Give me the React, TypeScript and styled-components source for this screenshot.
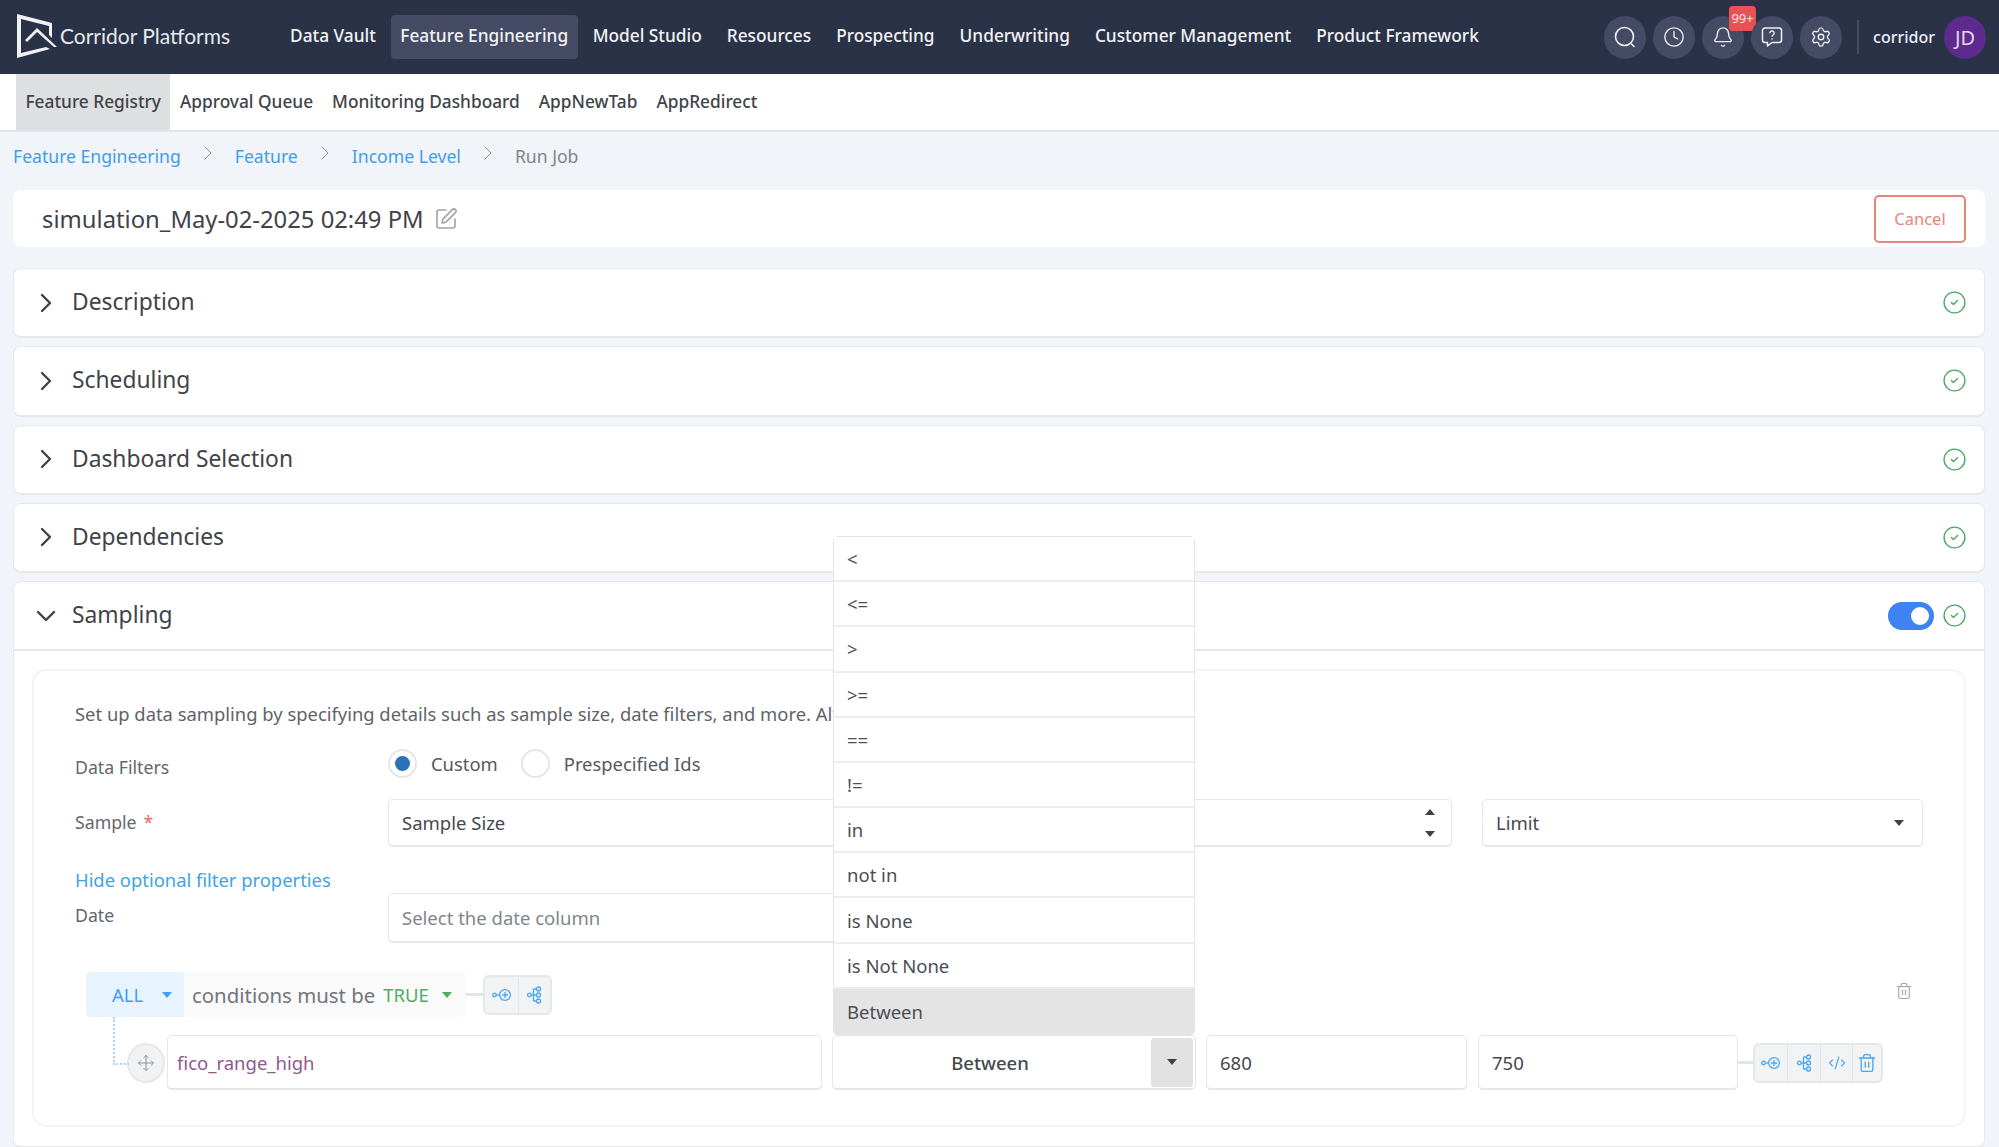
import React from "react";
import styled, { createGlobalStyle } from "styled-components";
import {
  Bell,
  ChevronDown,
  ChevronRight,
  CircleCheck,
  Clock,
  CodeXml,
  Move,
  Settings,
  SquarePen,
  Trash2,
} from "lucide-react";

const GlobalStyle = createGlobalStyle`
  html, body {
    margin: 0;
    padding: 0;
    height: 1147px;
    overflow: hidden;
    background: #f1f4f8;
    font-family: "Noto Sans", "Open Sans", sans-serif;
    color: #3f4349;
  }
  * { box-sizing: border-box; }
`;

const TopBar = styled.header`
  display: flex;
  align-items: center;
  height: 74px;
  padding: 0 13px 0 16px;
  background: #2a3248;
`;

const Brand = styled.div`
  display: flex;
  align-items: center;
  width: 264px;
  flex: none;
  svg {
    margin-top: -2px;
  }
`;

const BrandName = styled.span`
  margin-left: 2px;
  padding-bottom: 3px;
  font-family: "Lato", sans-serif;
  font-size: 21px;
  color: #e6e8ec;
  white-space: nowrap;
`;

const MainNav = styled.nav`
  display: flex;
  align-items: center;
  gap: 5px;
  flex: 1;
`;

const MainNavItem = styled.a<{ $active?: boolean }>`
  display: flex;
  align-items: center;
  height: 44px;
  padding: 0 ${(p) => (p.$active ? "9.5px" : "10px")} 3px;
  border-radius: 4px;
  font-size: 17.3px;
  font-weight: 500;
  color: #f2f3f5;
  white-space: nowrap;
  background: ${(p) => (p.$active ? "#454b65" : "transparent")};
`;

const ToolButtons = styled.div`
  display: flex;
  align-items: center;
  gap: 7px;
`;

const ToolButton = styled.div`
  position: relative;
  display: flex;
  align-items: center;
  justify-content: center;
  width: 42px;
  height: 43px;
  border-radius: 50%;
  background: #454b65;
  color: #eef0f3;
`;

const Badge = styled.span`
  position: absolute;
  top: -10px;
  left: 27px;
  width: 27px;
  height: 25px;
  border-radius: 4px;
  background: #e85252;
  color: #fbe3e3;
  font-size: 13px;
  line-height: 25px;
  text-align: center;
`;

const Divider = styled.div`
  width: 2px;
  height: 34px;
  margin: 0 14px 0 15px;
  background: #454b65;
`;

const UserName = styled.span`
  font-size: 16px;
  font-weight: 500;
  color: #eef0f3;
`;

const Avatar = styled.div`
  display: flex;
  align-items: center;
  justify-content: center;
  width: 42px;
  height: 43px;
  margin-left: 9px;
  border-radius: 50%;
  background: #5e2a8e;
  color: #e3d8ee;
  font-size: 20px;
`;

const SubNav = styled.nav`
  display: flex;
  height: 58px;
  padding-left: 16px;
  background: #fff;
  border-bottom: 2px solid #e4e4ea;
`;

const SubNavItem = styled.a<{ $active?: boolean }>`
  display: flex;
  align-items: center;
  padding: 0 9.5px 2px;
  font-size: 17.3px;
  font-weight: 500;
  color: #3f4349;
  white-space: nowrap;
  background: ${(p) => (p.$active ? "#dedfe1" : "transparent")};
`;

const Crumbs = styled.div`
  display: flex;
  align-items: center;
  height: 58px;
  padding: 0 0 10px 13px;
  font-size: 17.6px;
`;

const Crumb = styled.a<{ $current?: boolean }>`
  color: ${(p) => (p.$current ? "#80858b" : "#3d9df0")};
  white-space: nowrap;
`;

const CrumbGap = styled.span`
  display: flex;
  justify-content: center;
  width: 54px;
  color: #8b9096;
  margin-top: -6px;
`;

const Page = styled.main`
  display: flex;
  flex-direction: column;
  gap: 8px;
  padding: 0 14px 0 13px;
`;

const TitleCard = styled.div`
  display: flex;
  align-items: center;
  justify-content: space-between;
  height: 57px;
  margin-bottom: 13px;
  padding: 0 19px 0 29px;
  background: #fff;
  border-radius: 8px;
`;

const TitleText = styled.h1`
  display: flex;
  align-items: center;
  gap: 10px;
  margin: 0;
  font-size: 23.8px;
  font-weight: 400;
  color: #3f4349;
  svg {
    color: #a0a3a7;
  }
`;

const CancelButton = styled.button`
  width: 92px;
  height: 48px;
  background: #fff;
  border: 2px solid #e98578;
  border-radius: 5px;
  font: inherit;
  font-size: 16.5px;
  color: #e98578;
`;

const Section = styled.section`
  background: #fff;
  border: 1px solid #e6e8ea;
  border-bottom-width: 2px;
  border-radius: 8px;
`;

const SectionHeader = styled.div<{ $open?: boolean }>`
  display: flex;
  align-items: center;
  height: ${(p) => (p.$open ? "69px" : "67.25px")};
  padding: 0 17px 0 16px;
  border-bottom: ${(p) => (p.$open ? "2px solid #e6e8ea" : "none")};
  color: #3f4349;
`;

const SectionTitle = styled.span`
  flex: 1;
  margin-left: 10px;
  padding-bottom: 2px;
  font-size: 22.8px;
  line-height: 1.1;
`;

const Check = styled(CircleCheck)`
  color: #4fa865;
`;

const Toggle = styled.span`
  position: relative;
  width: 46px;
  height: 28px;
  margin-right: 8px;
  border-radius: 14px;
  background: #3f82f2;
  &::after {
    content: "";
    position: absolute;
    top: 5px;
    right: 5px;
    width: 18px;
    height: 18px;
    border-radius: 50%;
    background: #fff;
  }
`;

const SectionBody = styled.div`
  padding: 18px 18px 19px 18px;
`;

const InnerCard = styled.div`
  height: 458px;
  padding: 33px 41px 0 41px;
  border: 2px solid #f3f4f5;
  border-radius: 14px;
`;

const Description = styled.p`
  margin: 0 0 24px;
  font-size: 18.4px;
  line-height: 20px;
  color: #5e6369;
  white-space: nowrap;
`;

const FormRow = styled.div`
  display: flex;
  align-items: center;
`;

const FieldLabel = styled.label`
  width: 313px;
  flex: none;
  font-size: 17.7px;
  color: #63686e;
`;

const Required = styled.span`
  margin-left: 7px;
  color: #ec6a5e;
`;

const RadioRow = styled(FormRow)`
  height: 30px;
  margin-bottom: 21px;
  ${FieldLabel} {
    margin-top: 8px;
  }
`;

const RadioMark = styled.span<{ $checked?: boolean }>`
  display: flex;
  align-items: center;
  justify-content: center;
  width: 29px;
  height: 29px;
  margin-right: 14px;
  border: 2px solid #e4e6e9;
  border-radius: 50%;
  &::after {
    content: "";
    width: 15px;
    height: 15px;
    border-radius: 50%;
    background: ${(p) => (p.$checked ? "#2a72b5" : "transparent")};
  }
`;

const RadioText = styled.span`
  margin-right: 23px;
  font-size: 18.4px;
  color: #54595f;
`;

const TextBox = styled.div<{ $width: number; $height: number; $muted?: boolean }>`
  position: relative;
  display: flex;
  align-items: center;
  justify-content: space-between;
  width: ${(p) => p.$width}px;
  height: ${(p) => p.$height}px;
  padding: 0 13px;
  flex: none;
  background: #fff;
  border: 1px solid #e4e6e9;
  border-bottom-width: 2px;
  border-radius: 5px;
  font-size: 18.5px;
  color: ${(p) => (p.$muted ? "#81868c" : "#44484e")};
`;

const Caret = styled.span<{ $up?: boolean; $color?: string }>`
  display: inline-block;
  width: 0;
  height: 0;
  border-left: 5px solid transparent;
  border-right: 5px solid transparent;
  ${(p) =>
    p.$up
      ? `border-bottom: 6px solid ${p.$color ?? "#3f4349"};`
      : `border-top: 6px solid ${p.$color ?? "#3f4349"};`}
`;

const Spinner = styled.span`
  display: flex;
  flex-direction: column;
  gap: 16px;
  margin-right: 3px;
`;

const LinkRow = styled.div`
  margin: 23px 0 3px;
  height: 20px;
  font-size: 18.4px;
  line-height: 20px;
  color: #3fa3e0;
`;

const SampleRow = styled(FormRow)`
  gap: 30px;
  height: 48px;
  ${FieldLabel} {
    margin-right: -30px;
    margin-top: -3px;
  }
`;

const LimitBox = styled(TextBox)`
  padding-right: 18px;
`;

const DateRow = styled(FormRow)`
  height: 50px;
  ${FieldLabel} {
    margin-top: -6px;
  }
`;

const GroupRow = styled.div`
  display: flex;
  align-items: center;
  height: 45px;
  margin: 29px 0 18px;
  padding-left: 11px;
`;

const AllBox = styled.div`
  display: flex;
  align-items: center;
  justify-content: space-between;
  width: 98px;
  height: 45px;
  padding: 0 12px 0 26px;
  background: #e7f4ff;
  border-radius: 5px 0 0 5px;
  font-size: 18.5px;
  color: #3f9ff2;
`;

const ConditionBox = styled.div`
  display: flex;
  align-items: center;
  width: 282px;
  height: 45px;
  padding-left: 8px;
  background: #fafafa;
  border-radius: 0 5px 5px 0;
  font-size: 20.4px;
  color: #72767b;
  white-space: nowrap;
`;

const TrueText = styled.span`
  margin: 0 13px 0 8px;
  font-size: 18.5px;
  color: #55aa65;
`;

const Connector = styled.span<{ $width: number }>`
  width: ${(p) => p.$width}px;
  height: 3px;
  flex: none;
  background: #e3e4e5;
`;

const ActionGroup = styled.div`
  display: flex;
  height: 40px;
  flex: none;
  background: #f1f3f4;
  border: 2px solid #e6e7e8;
  border-radius: 6px;
  color: #49a6f4;
`;

const ActionCell = styled.span<{ $width: number }>`
  display: flex;
  align-items: center;
  justify-content: center;
  width: ${(p) => p.$width}px;
  & + & {
    border-left: 1px solid #e2e4e5;
  }
`;

const GroupTrash = styled(Trash2)`
  margin-left: auto;
  margin-right: 10px;
  margin-top: -8px;
  color: #a3a5a8;
`;

const ConditionRow = styled.div`
  position: relative;
  display: flex;
  align-items: center;
  height: 55px;
  padding-left: 52px;
  &::before {
    content: "";
    position: absolute;
    left: 38px;
    top: 0;
    width: 14px;
    height: 28px;
    margin-top: -18px;
    padding-top: 18px;
    box-sizing: content-box;
    border-left: 2px dotted #a9d7fb;
    border-bottom: 2px dotted #a9d7fb;
  }
`;

const MoveHandle = styled.span`
  display: flex;
  align-items: center;
  justify-content: center;
  width: 38px;
  height: 40px;
  margin-right: 2px;
  flex: none;
  background: #f1f2f3;
  border: 2px solid #e6e7e8;
  border-radius: 50%;
  color: #8f9295;
`;

const FieldName = styled(TextBox)`
  margin-right: 10px;
  padding-left: 9px;
  color: #8d5a8e;
`;

const ValueBox = styled(TextBox)`
  margin-right: 11px;
`;

const OperatorSelect = styled(TextBox)`
  margin-right: 10px;
  padding: 0 2px 0 0;
`;

const OperatorValue = styled.span`
  flex: 1;
  padding-right: 4px;
  font-weight: 500;
  text-align: center;
`;

const OperatorCaret = styled.span`
  display: flex;
  align-items: center;
  justify-content: center;
  width: 42px;
  height: 49px;
  background: #e2e2e2;
  border-radius: 3px;
`;

const OperatorMenu = styled.ul`
  position: absolute;
  left: 0;
  right: 0;
  bottom: calc(100% + 1px);
  margin: 0;
  padding: 0;
  list-style: none;
  background: #fff;
  border: 1px solid #e2e4e6;
  border-radius: 5px;
`;

const OperatorOption = styled.li<{ $selected?: boolean }>`
  display: flex;
  align-items: center;
  height: 45.2px;
  padding-left: 13px;
  border-bottom: 2px solid ${(p) => (p.$selected ? "#e4e4e4" : "#eceded")};
  background: ${(p) => (p.$selected ? "#e4e4e4" : "#fff")};
  color: #4a4e54;
  &:last-child {
    border-bottom: 0;
  }
`;

const LogoMark = () => (
  <svg width="42" height="44" viewBox="0 0 42 44" fill="none">
    <path d="M1 0 L36 9 L36 24 L33 21 L33 12 L5 5 L5 39 L30 33 L34 35 L1 44 Z" fill="#f1f2f4" />
    <path d="M9 26 L21 14 L41 33 L38 33 L21 18 L11 28 Z" fill="#f1f2f4" />
  </svg>
);

const SearchGlyph = () => (
  <svg width="22" height="22" viewBox="0 0 22 22" fill="none" stroke="currentColor" strokeWidth="1.6">
    <circle cx="10.5" cy="10.5" r="9" />
    <path d="M17.5 18 L20 20.5" strokeLinecap="round" />
  </svg>
);

const HelpGlyph = () => (
  <svg width="22" height="22" viewBox="0 0 22 22" fill="none" stroke="currentColor" strokeWidth="1.5">
    <path d="M4 2 H18 a2.5 2.5 0 0 1 2.5 2.5 V14 a2.5 2.5 0 0 1 -2.5 2.5 H11 L6.5 20 V16.5 H4 A2.5 2.5 0 0 1 1.5 14 V4.5 A2.5 2.5 0 0 1 4 2 Z" strokeLinejoin="round" />
    <path d="M8.8 7.2 a2.2 2.2 0 1 1 3.2 2 c-.7.4 -1 .8 -1 1.6" strokeWidth="1.4" />
    <circle cx="11" cy="13" r=".8" fill="currentColor" stroke="none" />
  </svg>
);

const AddRuleGlyph = () => (
  <svg width="20" height="14" viewBox="0 0 20 14" fill="none" stroke="currentColor" strokeWidth="1.3">
    <circle cx="2.5" cy="7" r="1.8" />
    <path d="M4.5 7 H7.5" />
    <circle cx="13" cy="7" r="5.4" />
    <path d="M13 4 V10 M10 7 H16" />
  </svg>
);

const AddGroupGlyph = () => (
  <svg width="15" height="18" viewBox="0 0 15 18" fill="none" stroke="currentColor" strokeWidth="1.3">
    <circle cx="2.4" cy="9" r="1.8" />
    <path d="M4.2 9 H6.5 M6.5 3 V15 M6.5 3 H9 M6.5 9 H9 M6.5 15 H9" />
    <circle cx="11.5" cy="3" r="2" />
    <circle cx="11.5" cy="9" r="2" />
    <circle cx="11.5" cy="15" r="2" />
  </svg>
);

const sections = ["Description", "Scheduling", "Dashboard Selection", "Dependencies"];
const operators = ["<", "<=", ">", ">=", "==", "!=", "in", "not in", "is None", "is Not None", "Between"];
const mainLinks = [
  "Data Vault",
  "Feature Engineering",
  "Model Studio",
  "Resources",
  "Prospecting",
  "Underwriting",
  "Customer Management",
  "Product Framework",
];
const subLinks = ["Feature Registry", "Approval Queue", "Monitoring Dashboard", "AppNewTab", "AppRedirect"];

export default function App() {
  return (
    <>
      <GlobalStyle />
      <TopBar>
        <Brand>
          <LogoMark />
          <BrandName>Corridor Platforms</BrandName>
        </Brand>
        <MainNav>
          {mainLinks.map((link) => (
            <MainNavItem key={link} $active={link === "Feature Engineering"}>
              {link}
            </MainNavItem>
          ))}
        </MainNav>
        <ToolButtons>
          <ToolButton><SearchGlyph /></ToolButton>
          <ToolButton><Clock size={22} strokeWidth={1.5} /></ToolButton>
          <ToolButton>
            <Bell size={22} strokeWidth={1.5} />
            <Badge>99+</Badge>
          </ToolButton>
          <ToolButton><HelpGlyph /></ToolButton>
          <ToolButton><Settings size={22} strokeWidth={1.5} /></ToolButton>
        </ToolButtons>
        <Divider />
        <UserName>corridor</UserName>
        <Avatar>JD</Avatar>
      </TopBar>
      <SubNav>
        {subLinks.map((link) => (
          <SubNavItem key={link} $active={link === "Feature Registry"}>
            {link}
          </SubNavItem>
        ))}
      </SubNav>
      <Crumbs>
        <Crumb>Feature Engineering</Crumb>
        <CrumbGap><ChevronRight size={24} strokeWidth={1} /></CrumbGap>
        <Crumb>Feature</Crumb>
        <CrumbGap><ChevronRight size={24} strokeWidth={1} /></CrumbGap>
        <Crumb>Income Level</Crumb>
        <CrumbGap><ChevronRight size={24} strokeWidth={1} /></CrumbGap>
        <Crumb $current>Run Job</Crumb>
      </Crumbs>
      <Page>
        <TitleCard>
          <TitleText>
            simulation_May-02-2025 02:49 PM
            <SquarePen size={24} strokeWidth={1.6} />
          </TitleText>
          <CancelButton>Cancel</CancelButton>
        </TitleCard>
        {sections.map((title) => (
          <Section key={title}>
            <SectionHeader>
              <ChevronRight size={32} strokeWidth={1.8} />
              <SectionTitle>{title}</SectionTitle>
              <Check size={25} strokeWidth={1.3} />
            </SectionHeader>
          </Section>
        ))}
        <Section>
          <SectionHeader $open>
            <ChevronDown size={32} strokeWidth={1.8} />
            <SectionTitle>Sampling</SectionTitle>
            <Toggle />
            <Check size={25} strokeWidth={1.3} />
          </SectionHeader>
          <SectionBody>
            <InnerCard>
              <Description>
                Set up data sampling by specifying details such as sample size, date filters, and more. Alternatively, you can provide a list of IDs
              </Description>
              <RadioRow>
                <FieldLabel>Data Filters</FieldLabel>
                <RadioMark $checked />
                <RadioText>Custom</RadioText>
                <RadioMark />
                <RadioText>Prespecified Ids</RadioText>
              </RadioRow>
              <SampleRow>
                <FieldLabel>
                  Sample<Required>*</Required>
                </FieldLabel>
                <TextBox $width={1064} $height={48}>
                  Sample Size
                  <Spinner>
                    <Caret $up />
                    <Caret />
                  </Spinner>
                </TextBox>
                <LimitBox $width={441} $height={48}>
                  Limit
                  <Caret />
                </LimitBox>
              </SampleRow>
              <LinkRow>Hide optional filter properties</LinkRow>
              <DateRow>
                <FieldLabel>Date</FieldLabel>
                <TextBox $width={700} $height={50} $muted>
                  Select the date column
                </TextBox>
              </DateRow>
              <GroupRow>
                <AllBox>
                  ALL
                  <Caret $color="#3f9ff2" />
                </AllBox>
                <ConditionBox>
                  conditions must be
                  <TrueText>TRUE</TrueText>
                  <Caret $color="#55aa65" />
                </ConditionBox>
                <Connector $width={17} />
                <ActionGroup>
                  <ActionCell $width={33}><AddRuleGlyph /></ActionCell>
                  <ActionCell $width={32}><AddGroupGlyph /></ActionCell>
                </ActionGroup>
                <GroupTrash size={18} strokeWidth={1.5} />
              </GroupRow>
              <ConditionRow>
                <MoveHandle><Move size={18} strokeWidth={1.3} /></MoveHandle>
                <FieldName $width={655} $height={55}>fico_range_high</FieldName>
                <OperatorSelect $width={364} $height={55}>
                  <OperatorValue>Between</OperatorValue>
                  <OperatorCaret><Caret /></OperatorCaret>
                  <OperatorMenu>
                    {operators.map((op) => (
                      <OperatorOption key={op} $selected={op === "Between"}>
                        {op}
                      </OperatorOption>
                    ))}
                  </OperatorMenu>
                </OperatorSelect>
                <ValueBox $width={261} $height={55}>680</ValueBox>
                <TextBox $width={260} $height={55}>750</TextBox>
                <Connector $width={15} />
                <ActionGroup>
                  <ActionCell $width={32}><AddRuleGlyph /></ActionCell>
                  <ActionCell $width={33}><AddGroupGlyph /></ActionCell>
                  <ActionCell $width={32}><CodeXml size={18} strokeWidth={1.5} /></ActionCell>
                  <ActionCell $width={29}><Trash2 size={20} strokeWidth={1.6} /></ActionCell>
                </ActionGroup>
              </ConditionRow>
            </InnerCard>
          </SectionBody>
        </Section>
      </Page>
    </>
  );
}
